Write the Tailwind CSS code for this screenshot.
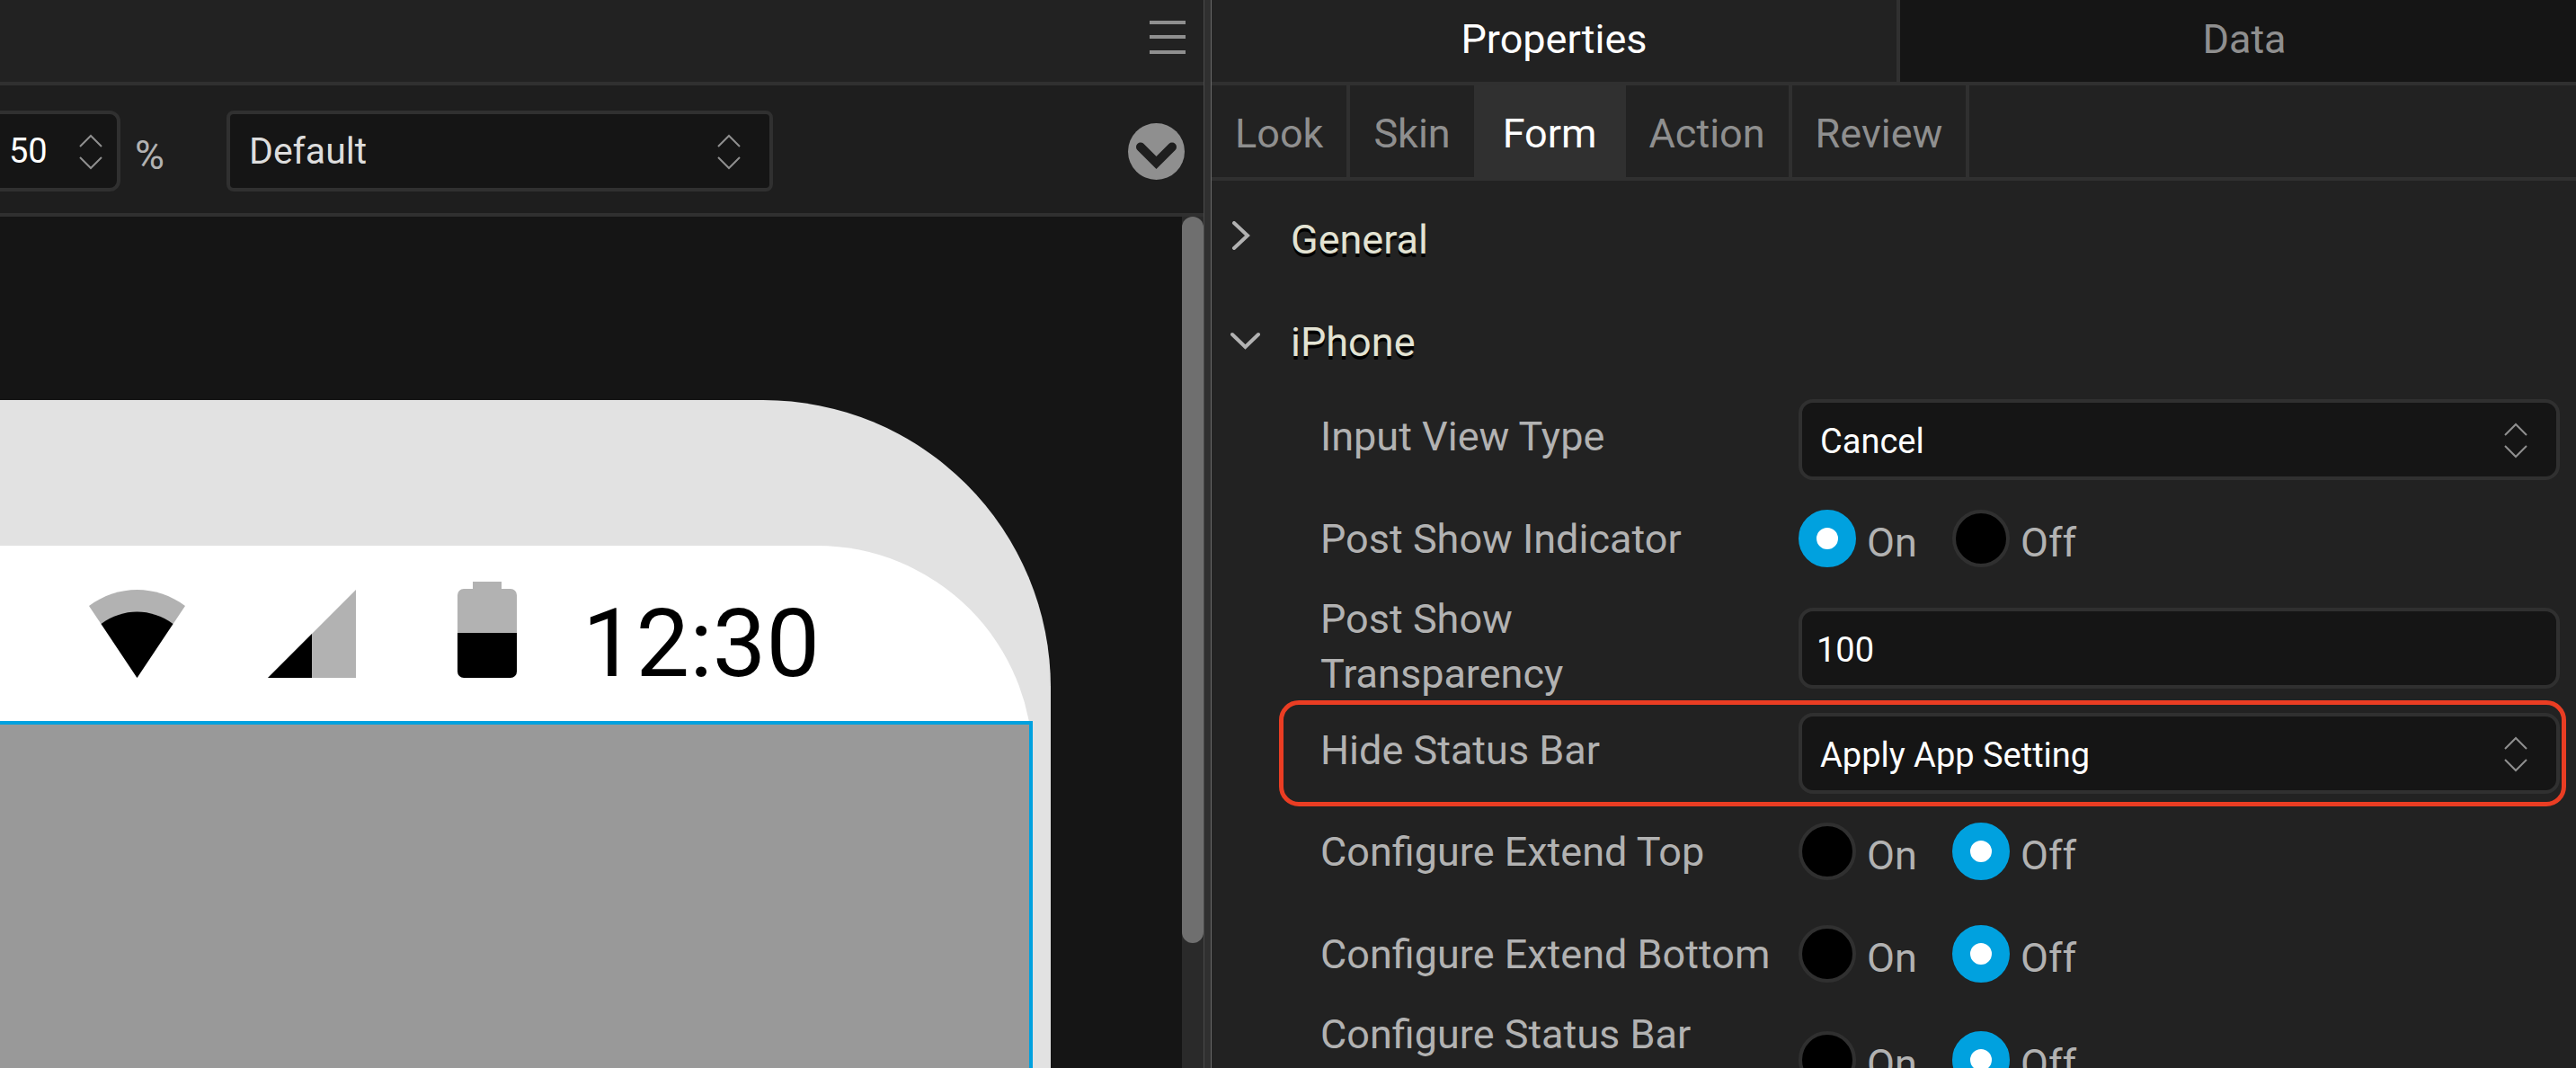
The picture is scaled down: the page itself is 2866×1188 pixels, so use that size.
<!DOCTYPE html>
<html lang="en">
  <head>
    <meta charset="UTF-8" />
    <meta name="viewport" content="width=device-width, initial-scale=1.0" />
    <title>Form Properties</title>
    <script src="https://cdn.jsdelivr.net/npm/@tailwindcss/browser@4"></script>
  </head>
  <body class="bg-[#222222] font-[Roboto,sans-serif] text-[45px] leading-[61px] text-[#b2b2b2]">
    <div class="grid h-screen grid-cols-[1339fr_9px_1518fr] overflow-hidden">
      <!-- Canvas side -->
      <main class="flex min-w-0 flex-col overflow-hidden">
        <header class="flex h-[95px] shrink-0 items-start justify-end border-b-4 border-[#303030] pt-[23px] pr-5">
          <button type="button" aria-label="Menu">
            <svg class="block h-[38px] w-10" viewBox="0 0 40 38" fill="#8f8f8f">
              <path d="M0 0h40v4H0zM0 16h40v4H0zM0 33h40v4H0z" />
            </svg>
          </button>
        </header>

        <div class="flex h-[146px] shrink-0 items-center border-b-4 border-[#303030] bg-[#1e1e1e] pt-1 pr-[21px]">
          <div class="relative -ml-4">
            <input
              type="text"
              value="50"
              aria-label="Zoom"
              class="block h-[90px] w-[150px] rounded-xl border-4 border-[#303030] bg-[#151515] pl-[22px] text-[38px] text-white outline-none"
            />
            <svg class="pointer-events-none absolute top-[26px] right-5 h-10 w-[26px]" viewBox="0 0 26 40" fill="none" stroke="#8f8f8f" stroke-width="2">
              <path d="M1 14 13 2l12 12M1 26l12 12 12-12" />
            </svg>
          </div>
          <span class="pt-2 pl-4">%</span>
          <div class="relative ml-[69px]">
            <select
              aria-label="Channel"
              class="block h-[90px] w-[608px] appearance-none rounded-lg border-4 border-[#303030] bg-[#151515] pl-[21px] text-[41px] text-[#dddddd] outline-none"
            >
              <option>Default</option>
            </select>
            <svg class="pointer-events-none absolute top-[26px] right-9 h-10 w-[26px]" viewBox="0 0 26 40" fill="none" stroke="#8f8f8f" stroke-width="2">
              <path d="M1 14 13 2l12 12M1 26l12 12 12-12" />
            </svg>
          </div>
          <button type="button" aria-label="Expand" class="ml-auto">
            <svg class="block size-[63px]" viewBox="0 0 63 63">
              <circle cx="31.500" cy="31.500" r="31.500" fill="#8f8f8f" />
              <path d="M14 26.500 31.500 44 49 26.500" fill="none" stroke="#1e1e1e" stroke-width="10" stroke-linecap="round" />
            </svg>
          </button>
        </div>

        <div class="flex min-h-0 flex-1 bg-[#151515]">
          <div class="min-w-0 flex-1 overflow-hidden pt-[204px] pr-[146px]">
            <!-- Device frame -->
            <div class="h-full rounded-tr-[320px] bg-[#e2e2e2] pt-[162px] pr-5">
              <div class="flex h-full flex-col rounded-tr-[240px] bg-white">
                <div class="flex h-[195px] shrink-0 items-end justify-end pr-[237px] pb-12">
                  <svg class="h-[98px] w-[107px]" viewBox="0 0 107 98">
                    <path d="M0 18C32-6 75-6 107 18L53.500 98Z" fill="#b2b2b2" />
                    <path d="M13.500 38C38 20 69 20 93.500 38L53.500 98Z" fill="#000" />
                  </svg>
                  <svg class="ml-[92px] h-[98px] w-[98px]" viewBox="0 0 98 98">
                    <path d="M98 0v98H0z" fill="#b2b2b2" />
                    <path d="M49 49v49H0z" fill="#000" />
                  </svg>
                  <svg class="ml-[113px] h-[107px] w-[66px]" viewBox="0 0 66 107">
                    <path d="M17 0h32v8h10a7 7 0 0 1 7 7v42H0V15a7 7 0 0 1 7-7h10z" fill="#b2b2b2" />
                    <path d="M0 57h66v43a7 7 0 0 1-7 7H7a7 7 0 0 1-7-7z" fill="#000" />
                  </svg>
                  <span class="ml-[73px] text-[106px] leading-[76px] text-black">12:30</span>
                </div>
                <div class="flex-1 border-t-4 border-r-4 border-[#00a1df] bg-[#999999]"></div>
              </div>
            </div>
          </div>
          <div class="w-6 bg-[#2a2a2a]">
            <div class="h-[808px] rounded-full bg-[#6f6f6f]"></div>
          </div>
        </div>
      </main>

      <div class="border-r border-l border-r-[#6a6a6a] border-l-[#4a4a4a] bg-[#303030]"></div>

      <!-- Properties side -->
      <aside class="min-w-0 overflow-hidden">
        <div class="-mr-[14px] grid h-[95px] grid-cols-2 border-b-4 border-[#303030]">
          <button type="button" class="border-r-4 border-[#303030] pb-1 text-white">Properties</button>
          <button type="button" class="bg-[#151515] pb-1 text-[#8f8f8f]">Data</button>
        </div>

        <nav class="flex h-[106px] border-b-4 border-[#303030] text-[#8f8f8f]">
          <button type="button" class="border-r-4 border-[#303030] px-[26px] pt-1">Look</button>
          <button type="button" class="px-[26px] pt-1">Skin</button>
          <button type="button" class="bg-[#303030] px-8 pt-1 text-white">Form</button>
          <button type="button" class="border-r-4 border-[#303030] px-[26px] pt-1">Action</button>
          <button type="button" class="border-r-4 border-[#303030] px-[26px] pt-1">Review</button>
        </nav>

        <section>
          <h2 class="pt-2">
            <button type="button" class="flex h-[114px] w-full items-center pl-[21px] text-[#e3e3d3] [text-shadow:0_4px_0_#000]">
              <svg class="mr-[34px] mb-2 h-8 w-[33px]" viewBox="0 0 33 32" fill="none" stroke="#b2b2b2" stroke-width="4" stroke-linecap="round">
                <path d="M4 2l15 14L4 30" />
              </svg>
              General
            </button>
          </h2>
          <h2>
            <button type="button" class="flex h-[107px] w-full items-center pt-2 pl-[21px] text-[#e3e3d3] [text-shadow:0_4px_0_#000]">
              <svg class="mr-[34px] mb-1 h-5 w-[33px]" viewBox="0 0 33 20" fill="none" stroke="#b2b2b2" stroke-width="4" stroke-linecap="round">
                <path d="M2 3l14.500 14L31 3" />
              </svg>
              iPhone
            </button>
          </h2>

          <div class="grid h-[114px] grid-cols-[532px_1fr] items-center pr-[18px] pl-[121px]">
            <label for="input-view" class="pb-1">Input View Type</label>
            <div class="relative mt-1">
              <select id="input-view" class="block h-[90px] w-full appearance-none rounded-2xl border-4 border-[#303030] bg-[#151515] pt-1 pl-5 text-[38px] text-white outline-none">
                <option>Cancel</option>
              </select>
              <svg class="pointer-events-none absolute top-[26px] right-9 h-10 w-[26px]" viewBox="0 0 26 40" fill="none" stroke="#8f8f8f" stroke-width="2">
                <path d="M1 14 13 2l12 12M1 26l12 12 12-12" />
              </svg>
            </div>
          </div>

          <div class="grid h-[114px] grid-cols-[532px_1fr] items-center pr-[18px] pl-[121px]" role="radiogroup" aria-labelledby="indicator">
            <span id="indicator" class="pb-1">Post Show Indicator</span>
            <div class="flex pb-1">
              <label class="flex w-[171px] items-center gap-3">
                <input type="radio" name="indicator" checked class="size-16 appearance-none rounded-full border-4 border-[#303030] bg-black checked:border-[20px] checked:border-[#00a1df] checked:bg-white" />
                <span class="pt-2">On</span>
              </label>
              <label class="flex items-center gap-3">
                <input type="radio" name="indicator" class="size-16 appearance-none rounded-full border-4 border-[#303030] bg-black checked:border-[20px] checked:border-[#00a1df] checked:bg-white" />
                <span class="pt-2">Off</span>
              </label>
            </div>
          </div>

          <div class="grid h-[122px] grid-cols-[532px_1fr] items-center pr-[18px] pl-[121px]">
            <label for="transparency">Post Show<br />Transparency</label>
            <input id="transparency" type="text" value="100" class="mt-1 block h-[90px] w-full rounded-2xl border-4 border-[#303030] bg-[#151515] pt-1 pl-4 text-[38px] text-white outline-none" />
          </div>

          <div class="relative grid h-28 grid-cols-[532px_1fr] items-center pr-[18px] pl-[121px]">
            <label for="hide-status" class="pb-1">Hide Status Bar</label>
            <div class="relative mt-1">
              <select id="hide-status" class="block h-[90px] w-full appearance-none rounded-2xl border-4 border-[#303030] bg-[#151515] pt-1 pl-5 text-[38px] text-white outline-none">
                <option>Apply App Setting</option>
              </select>
              <svg class="pointer-events-none absolute top-[26px] right-9 h-10 w-[26px]" viewBox="0 0 26 40" fill="none" stroke="#8f8f8f" stroke-width="2">
                <path d="M1 14 13 2l12 12M1 26l12 12 12-12" />
              </svg>
            </div>
            <!-- Highlight around the row -->
            <div class="pointer-events-none absolute -top-px right-[11px] -bottom-[5px] left-[75px] rounded-[22px] border-5 border-[#ea3d23]"></div>
          </div>

          <div class="grid h-[114px] grid-cols-[532px_1fr] items-center pr-[18px] pl-[121px]" role="radiogroup" aria-labelledby="extend-top">
            <span id="extend-top" class="pb-1">Configure Extend Top</span>
            <div class="flex pb-1">
              <label class="flex w-[171px] items-center gap-3">
                <input type="radio" name="extend-top" class="size-16 appearance-none rounded-full border-4 border-[#303030] bg-black checked:border-[20px] checked:border-[#00a1df] checked:bg-white" />
                <span class="pt-2">On</span>
              </label>
              <label class="flex items-center gap-3">
                <input type="radio" name="extend-top" checked class="size-16 appearance-none rounded-full border-4 border-[#303030] bg-black checked:border-[20px] checked:border-[#00a1df] checked:bg-white" />
                <span class="pt-2">Off</span>
              </label>
            </div>
          </div>

          <div class="grid h-[114px] grid-cols-[532px_1fr] items-center pr-[18px] pl-[121px]" role="radiogroup" aria-labelledby="extend-bottom">
            <span id="extend-bottom" class="pb-1">Configure Extend Bottom</span>
            <div class="flex pb-1">
              <label class="flex w-[171px] items-center gap-3">
                <input type="radio" name="extend-bottom" class="size-16 appearance-none rounded-full border-4 border-[#303030] bg-black checked:border-[20px] checked:border-[#00a1df] checked:bg-white" />
                <span class="pt-2">On</span>
              </label>
              <label class="flex items-center gap-3">
                <input type="radio" name="extend-bottom" checked class="size-16 appearance-none rounded-full border-4 border-[#303030] bg-black checked:border-[20px] checked:border-[#00a1df] checked:bg-white" />
                <span class="pt-2">Off</span>
              </label>
            </div>
          </div>

          <div class="grid h-[122px] grid-cols-[532px_1fr] items-center pr-[18px] pl-[121px]" role="radiogroup" aria-labelledby="status-bar">
            <span id="status-bar" class="self-start">Configure Status Bar</span>
            <div class="flex pb-1">
              <label class="flex w-[171px] items-center gap-3">
                <input type="radio" name="status-bar" class="size-16 appearance-none rounded-full border-4 border-[#303030] bg-black checked:border-[20px] checked:border-[#00a1df] checked:bg-white" />
                <span class="pt-2">On</span>
              </label>
              <label class="flex items-center gap-3">
                <input type="radio" name="status-bar" checked class="size-16 appearance-none rounded-full border-4 border-[#303030] bg-black checked:border-[20px] checked:border-[#00a1df] checked:bg-white" />
                <span class="pt-2">Off</span>
              </label>
            </div>
          </div>
        </section>
      </aside>
    </div>
  </body>
</html>
